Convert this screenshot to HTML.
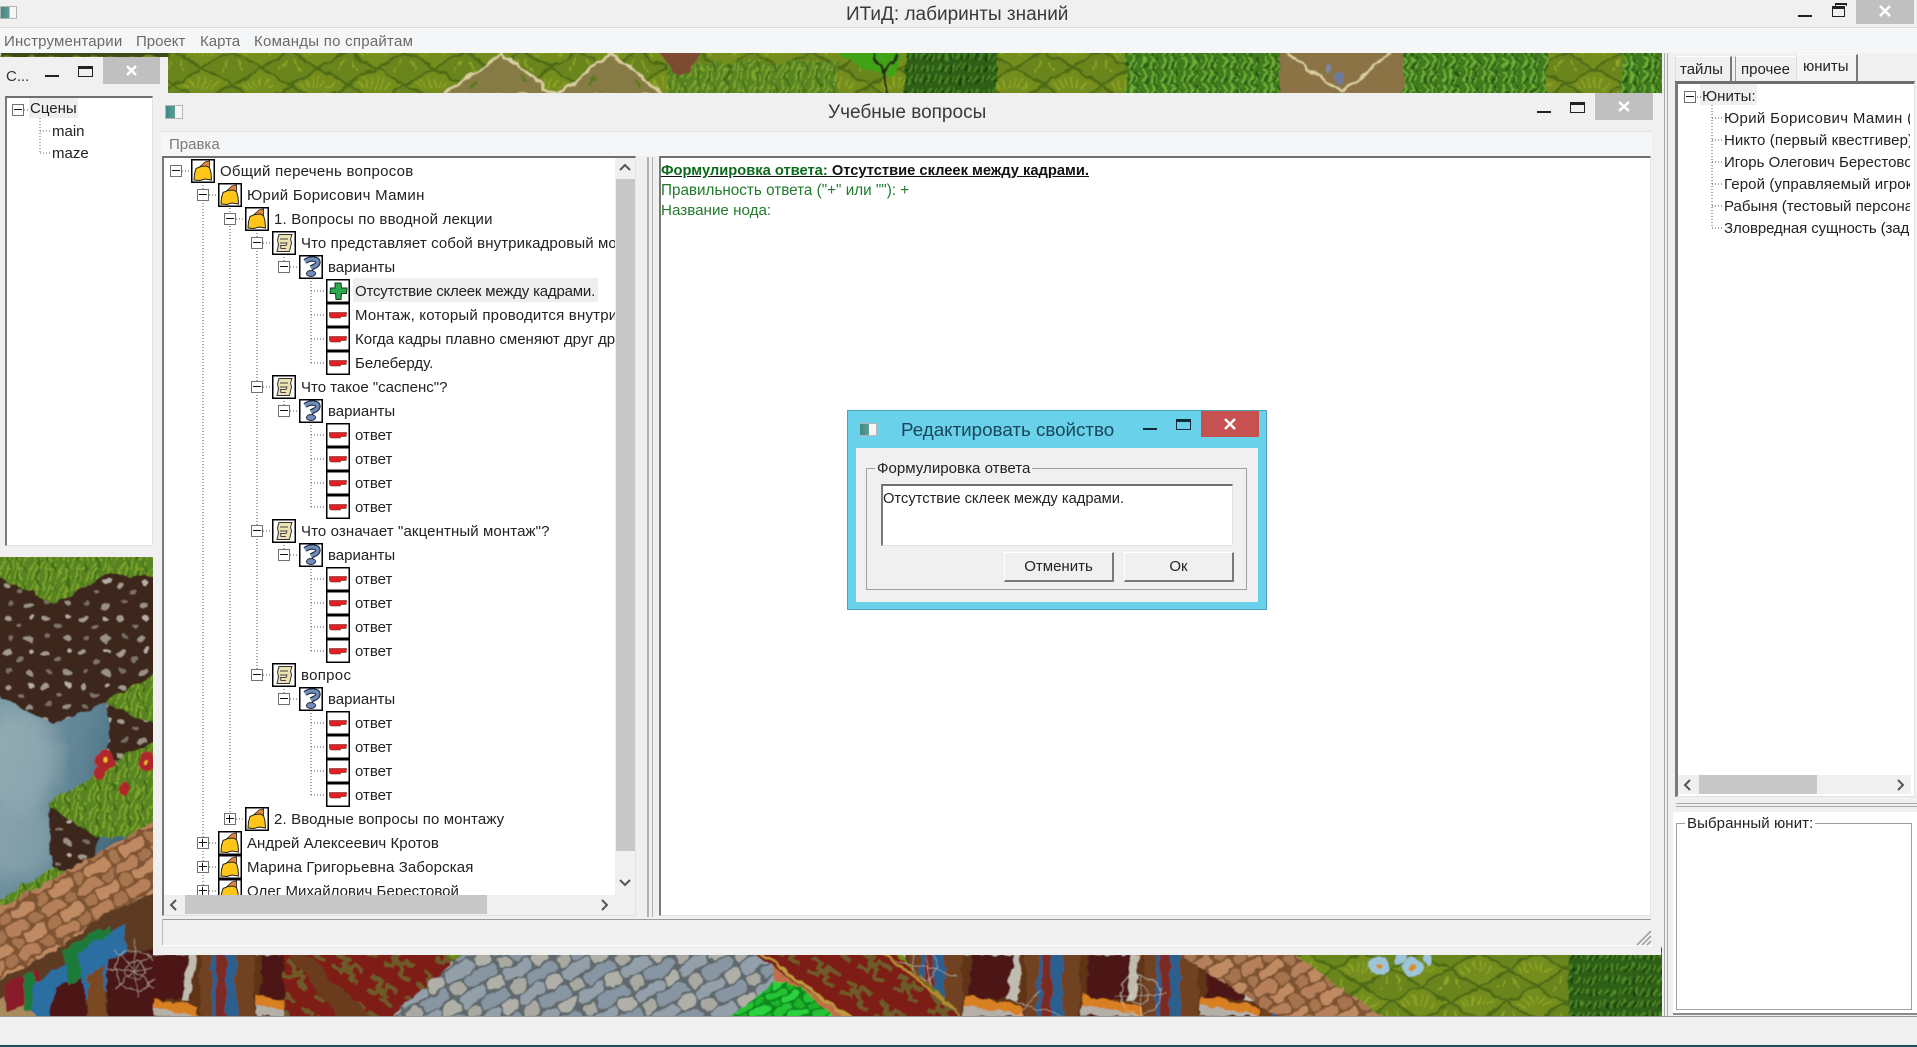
<!DOCTYPE html>
<html lang="ru"><head><meta charset="utf-8"><title>ИТиД: лабиринты знаний</title>
<style>
html,body{margin:0;padding:0;width:1917px;height:1047px;overflow:hidden;background:#f0f0f0}
body{position:relative;font:15px/20px "Liberation Sans","Noto Sans CJK SC",sans-serif;color:#222}
.t{position:absolute;white-space:nowrap}
.box{position:absolute;background:#fff;box-sizing:border-box;border-top:2px solid #6f6f6f;border-left:2px solid #7a7a7a;border-right:1px solid #e4e4e4;border-bottom:1px solid #e0e0e0}
.mn{position:absolute;height:2px;width:14px;background:#222}
.mx{position:absolute;box-sizing:border-box;width:15px;height:11px;border:1px solid #222;border-top-width:3px}
.cl{position:absolute;background:#c0c0c0}
.cl svg{position:absolute;left:0;top:0;width:100%;height:100%}
.tree{position:absolute;overflow:hidden;background:#fff}
.r{position:absolute;height:24px;width:600px;white-space:nowrap}
.r svg.i{position:absolute;left:20px;top:0;width:24px;height:24px}
.r span{position:absolute;left:49px;top:0;line-height:26px;color:#222}
.r span.h{left:47px;top:-1px;height:24px;line-height:28px;padding:0 3px 0 2px;background:#efefef;letter-spacing:-.19px}
.e{position:absolute;left:-1px;top:6px;width:10px;height:10px;border:1px solid #707070;background:#fff}
.e::before{content:"";position:absolute;left:1px;top:4px;width:8px;height:1px;background:#111}
.e.p::after{content:"";position:absolute;left:4px;top:1px;width:1px;height:8px;background:#111}
.ico{position:absolute;width:17px;height:13px;box-sizing:border-box;background:linear-gradient(90deg,#3d8a85 0,#5f9c92 55%,#f6f6f6 56%);border:1px solid #b4b4b4}
.btn{position:absolute;box-sizing:border-box;height:30px;width:110px;background:#f0f0f0;border-top:1px solid #fff;border-left:1px solid #fff;border-right:2px solid #777;border-bottom:2px solid #777;text-align:center;line-height:27px;font-size:15px;color:#222}
</style></head><body>

<svg width="1917" height="1047" viewBox="0 0 1917 1047" style="position:absolute;left:0;top:0">
<defs>
<pattern id="gr" width="58" height="34" patternUnits="userSpaceOnUse">
<rect width="58" height="34" fill="#6b851d"/>
<path d="M0 17 29 0 58 17 29 34Z" fill="#748d1e"/>
<path d="M0 17 29 0 58 17M0 17 29 34 58 17" fill="none" stroke="#4d6a14" stroke-width="2.500"/>
<path d="M20 20l-5-8M24 20l-2-10M28 20l1-11M32 20l4-9M36 21l7-6M16 21l-6-5M10 3l-3-6M48 3l3-6M7 33l-2-7M52 33l2-7" stroke="#8ea528" stroke-width="1.600" fill="none"/>
</pattern>
<pattern id="gr2" width="30" height="20" patternUnits="userSpaceOnUse">
<rect width="30" height="20" fill="#588520"/>
<path d="M3 20l3-12M9 20l-2-14M15 20l4-16M21 20l-1-12M27 20l3-10M0 10l5-8M12 10l3-9M22 10l4-8" stroke="#80a42e" stroke-width="1.800"/>
<path d="M6 20l3-10M18 20l2-10M26 12l-3-10M10 8l-3-8" stroke="#3c6a14" stroke-width="1.600"/>
</pattern>
<pattern id="bush" width="20" height="14" patternUnits="userSpaceOnUse">
<rect width="20" height="14" fill="#3f7a1f"/>
<path d="M2 12l5-8M9 13l4-10M15 12l4-9M6 4l-3-5M14 6l-3-6" stroke="#6fb038" stroke-width="2"/>
<path d="M5 13l3-6M12 14l4-7M19 7l-3-6" stroke="#255012" stroke-width="1.500"/>
</pattern>
<pattern id="dk" width="18" height="12" patternUnits="userSpaceOnUse">
<rect width="18" height="12" fill="#2f5f16"/>
<path d="M2 11l4-7M9 12l3-8M15 11l3-7" stroke="#4e8a26" stroke-width="1.800"/>
<path d="M5 12l3-5M13 12l2-6" stroke="#173a0a" stroke-width="1.500"/>
</pattern>
<pattern id="dirt" width="38" height="34" patternUnits="userSpaceOnUse">
<rect width="38" height="34" fill="#3c261a"/>
<ellipse cx="7" cy="7" rx="4" ry="2.700" fill="#a59a8e"/><ellipse cx="20" cy="14" rx="3.200" ry="2.200" fill="#7d7369"/>
<ellipse cx="31" cy="5" rx="2.700" ry="2" fill="#b8aea4"/><ellipse cx="10" cy="25" rx="3.200" ry="2.200" fill="#776c62"/>
<ellipse cx="29" cy="27" rx="4.500" ry="2.800" fill="#9a9085"/>
</pattern>
<pattern id="cob" width="42" height="26" patternUnits="userSpaceOnUse" patternTransform="rotate(-30)">
<rect width="42" height="26" fill="#7d5233"/>
<rect x="1" y="1" width="24" height="11" rx="4" fill="#b5805a"/><rect x="27" y="1" width="14" height="11" rx="4" fill="#a6734f"/>
<rect x="1" y="14" width="11" height="11" rx="4" fill="#a8764f"/><rect x="14" y="14" width="26" height="11" rx="4" fill="#c08a62"/>
</pattern>
<pattern id="gs" width="52" height="28" patternUnits="userSpaceOnUse" patternTransform="rotate(-30)">
<rect width="52" height="28" fill="#5f676c"/>
<rect x="1" y="1" width="30" height="12" rx="4" fill="#93a0aa"/><rect x="33" y="1" width="18" height="12" rx="4" fill="#b0b0a8"/>
<rect x="1" y="15" width="14" height="12" rx="4" fill="#a9a9a2"/><rect x="17" y="15" width="33" height="12" rx="4" fill="#8796a2"/>
</pattern>
<pattern id="gn" width="34" height="18" patternUnits="userSpaceOnUse" patternTransform="rotate(-25)">
<rect width="34" height="18" fill="#0e8a1c"/>
<rect x="1" y="1" width="20" height="7" rx="3" fill="#25c234"/><rect x="23" y="1" width="10" height="7" rx="3" fill="#1cb22c"/>
<rect x="1" y="10" width="10" height="7" rx="3" fill="#1cb22c"/><rect x="13" y="10" width="20" height="7" rx="3" fill="#2ad23c"/>
</pattern>
<pattern id="crp" width="40" height="32" patternUnits="userSpaceOnUse" patternTransform="rotate(33)">
<rect width="40" height="32" fill="#7e1b12"/>
<path d="M4 8h10v6h8v-6h12M6 22h10v-5h10v5h10" fill="none" stroke="#6d5c2a" stroke-width="4"/>
</pattern>
<pattern id="shelf" width="118" height="61" patternUnits="userSpaceOnUse" patternTransform="translate(0 955)">
<rect width="118" height="61" fill="#5e3419"/>
<path d="M0 0h18v61H0z" fill="#6f4323"/>
<path d="M28 0h42l-5 44H24z" fill="#4d1712"/>
<path d="M70 0h8l-6 46h-8z" fill="#c2bcb0"/>
<path d="M20 40l60 12v9H20z" fill="#d87f22"/>
<path d="M20 50l60 11H20z" fill="#b4b0a8"/>
<path d="M82 0h36v61H82z" fill="#2c5e8e"/><path d="M82 0h12v61H82z" fill="#6f4323"/><path d="M98 0h10v61H98z" fill="#7c2a22"/>
</pattern>
<linearGradient id="sky" x1="0" y1="0" x2="1" y2="0.3"><stop offset="0" stop-color="#82a0aa"/><stop offset=".55" stop-color="#5f8494"/><stop offset="1" stop-color="#33596d"/></linearGradient>
<filter id="bl"><feGaussianBlur stdDeviation="9"/></filter>
<filter id="org" x="0" y="0" width="100%" height="100%"><feTurbulence type="fractalNoise" baseFrequency=".07" numOctaves="3" seed="4"/><feDisplacementMap in="SourceGraphic" scale="9" xChannelSelector="R" yChannelSelector="G"/><feGaussianBlur stdDeviation=".6"/></filter>
<symbol id="bag" viewBox="0 0 24 24"><rect x=".75" y=".75" width="22.500" height="22.500" fill="#fff" stroke="#000" stroke-width="1.500"/><path d="M9 7.500 14 3 18.500 2 18.500 8.500Z" fill="#e8853a" stroke="#222" stroke-width=".8"/><path d="M5 9.500 10 7.500 15 7 18.500 8.500 20 14 20.500 21 14 20 9 21.500 3 21 3.500 15Z" fill="#ffc618" stroke="#222" stroke-width="1"/></symbol>
<symbol id="scr" viewBox="0 0 24 24"><rect x=".75" y=".75" width="22.500" height="22.500" fill="#fff" stroke="#000" stroke-width="1.500"/><path d="M7 3.500H20L18.500 8 19.500 12 17.500 20.500H5L6.500 14 5.500 9Z" fill="#efe2b4" stroke="#333" stroke-width="1"/><path d="M8 8h8M8 12h7l-1 2.500H8.500l.5 3h5" fill="none" stroke="#444" stroke-width="1"/></symbol>
<symbol id="q" viewBox="0 0 24 24"><rect x=".75" y=".75" width="22.500" height="22.500" fill="#fff" stroke="#000" stroke-width="1.500"/><path d="M6 6.500Q12 2.500 18 5 20.500 8.500 16 11L12 13" fill="none" stroke="#1d2a40" stroke-width="5.500"/><path d="M6 6.500Q12 2.500 18 5 20.500 8.500 16 11L12 13" fill="none" stroke="#6f8db8" stroke-width="3.200"/><ellipse cx="12" cy="18.500" rx="4.500" ry="3" fill="#6f8db8" stroke="#1d2a40"/></symbol>
<symbol id="pl" viewBox="0 0 24 24"><rect x=".75" y=".75" width="22.500" height="22.500" fill="#fff" stroke="#000" stroke-width="1.500"/><path d="M9 4H15L15.500 9H21L20.500 14.500H15.500L15 20.500H10L9.500 14.500H4L4.500 9H9Z" fill="#2ea84f" stroke="#0c3a1c" stroke-width="1"/></symbol>
<symbol id="mi" viewBox="0 0 24 24"><rect x=".75" y=".75" width="22.500" height="22.500" fill="#fff" stroke="#000" stroke-width="1.500"/><path d="M3.500 9.500H20.500L20 13.500H15L14 15H5L3.500 13.500Z" fill="#e12025" stroke="#5a1416" stroke-width=".6"/></symbol>
</defs>

<g filter="url(#org)">
<!-- top strip -->
<rect x="0" y="44" width="1680" height="52" fill="url(#gr)"/>
<rect x="0" y="44" width="168" height="13" fill="#3e4a18"/>
<path d="M443 96 502 53 557 96ZM557 96 611 53 667 96Z" fill="#867a45" stroke="#d9cf9c" stroke-width="2.500"/>
<path d="M470 88l8-8M520 75l6 8M590 85l5-9M635 80l6 8" stroke="#5c7a1a" stroke-width="3"/>
<rect x="667" y="62" width="172" height="34" fill="url(#gr2)"/>
<path d="M650 44H705L690 70 680 78 672 70Z" fill="#7b4b33"/>
<path d="M834 44H906L892 78 870 70 846 62Z" fill="#3fa318"/>
<rect x="906" y="44" width="91" height="52" fill="url(#dk)"/>
<path d="M887 96 884 70 872 50M884 72 898 56" stroke="#2a2a14" stroke-width="2.500" fill="none"/>
<rect x="1126" y="44" width="153" height="52" fill="url(#bush)"/>
<rect x="1279" y="44" width="124" height="52" fill="#8b7344"/>
<path d="M1284 50 1341 93 1394 50" fill="none" stroke="#d9cf9c" stroke-width="2.500"/>
<ellipse cx="1328" cy="68" rx="3" ry="6" fill="#7b87a0"/><ellipse cx="1340" cy="79" rx="4" ry="7" fill="#6e7c9c"/>
<rect x="1403" y="44" width="144" height="52" fill="url(#bush)"/>
<rect x="1623" y="44" width="50" height="52" fill="url(#bush)"/>

<!-- left lower scene -->
<rect x="0" y="550" width="170" height="475" fill="url(#gr2)"/>
<polygon points="-10,690 170,690 170,905 -10,905" fill="url(#sky)"/>
<ellipse cx="20" cy="760" rx="40" ry="50" fill="#a5b8be" opacity=".55" filter="url(#bl)"/>
<ellipse cx="20" cy="840" rx="40" ry="40" fill="#a5b8be" opacity=".4" filter="url(#bl)"/>
<polygon points="-10,572 53,604 107,575 170,575 170,700 107,702 53,725 -10,692" fill="url(#dirt)"/>
<polygon points="-10,550 170,550 170,578 107,574 53,604 -10,572" fill="url(#gr2)"/>
<polygon points="107,700 170,668 170,730 135,718 107,706" fill="url(#gr2)"/>
<polygon points="107,704 170,730 170,742 118,760 107,760" fill="url(#dirt)"/>
<polygon points="50,806 100,832 90,880 52,868" fill="url(#dirt)"/>
<polygon points="50,802 95,775 125,755 170,738 170,828 100,838 50,806" fill="url(#gr2)"/>
<polygon points="-10,905 52,868 90,880 125,836 170,812 170,840 60,900 -10,935" fill="url(#gr2)"/>
<polygon points="-10,915 170,812 170,885 107,913 52,953 -10,985" fill="url(#cob)"/>
<polygon points="-10,985 52,953 107,913 170,885 170,1025 -10,1025" fill="#5c3a20"/>
<polygon points="-10,1003 18,990 46,1025 -10,1025" fill="#a88a5c"/>
<polygon points="4,985 38,968 40,1000 6,1012" fill="#8a1a2a"/>
<polygon points="22,976 34,970 36,1008 24,1012" fill="#1f7a3a"/>
<polygon points="32,985 70,960 78,1010 36,1025" fill="#2c6ea2"/>
<polygon points="50,1025 54,988 84,976 88,1025" fill="#4d1714"/>
<polygon points="60,950 108,925 122,950 70,985" fill="#1f7a3a"/>
<polygon points="78,952 125,925 130,985 86,1000" fill="#2c6ea2"/>
<polygon points="108,1025 108,960 170,940 170,1025" fill="#4b1916"/>
<polygon points="88,1025 88,975 104,966 108,1025" fill="#7a4a22"/>
<g fill="#b0262a"><circle cx="105" cy="761" r="9"/><circle cx="99" cy="774" r="6"/><circle cx="124" cy="789" r="6"/><circle cx="147" cy="762" r="9"/></g>
<g fill="#e8c020"><circle cx="105" cy="761" r="2"/><circle cx="147" cy="762" r="2"/></g>
<g stroke="#d8d0c4" stroke-width=".7" fill="none" opacity=".7"><path d="M135 940 135 1000M108 970 160 970M115 950 155 990M155 950 115 990"/><circle cx="135" cy="970" r="10"/><circle cx="135" cy="970" r="20"/></g>

<!-- bottom strip -->
<rect x="153" y="948" width="1520" height="78" fill="url(#gr)"/>
<rect x="153" y="948" width="131" height="78" fill="url(#shelf)"/>
<polygon points="284,948 440,948 530,1026 284,1026" fill="url(#crp)"/>
<polygon points="284,948 300,948 380,1026 345,1026" fill="#6a3a1c"/>
<polygon points="385,1026 450,975 470,948 790,948 870,1026" fill="#c07048"/>
<polygon points="381,1026 470,948 770,948 777,990 727,1026" fill="url(#gs)"/>
<polygon points="717,1026 775,980 800,987 845,1026" fill="url(#gn)"/>
<polygon points="745,948 890,948 970,1026 860,1026" fill="url(#crp)"/>
<path d="M757 950 860 1026" stroke="#c29a40" stroke-width="3"/>
<path d="M880 950 975 1026" stroke="#b08a30" stroke-width="3"/>
<polygon points="893,948 1218,948 1292,1026 972,1026" fill="url(#shelf)"/>
<g stroke="#d8d0c4" stroke-width=".8" fill="none" opacity=".7"><path d="M925 955 930 985M895 960 955 975M1020 1016 1040 990M1010 1000 1060 1015M1140 975 1140 1016M1115 995 1165 995"/><circle cx="1140" cy="995" r="10"/><circle cx="1140" cy="995" r="20"/><circle cx="925" cy="965" r="14"/></g>
<polygon points="1170,948 1285,948 1397,1026 1292,1026" fill="url(#cob)"/>
<rect x="1569" y="948" width="104" height="78" fill="url(#dk)"/>
<g fill="#9cc6d8"><circle cx="1380" cy="966" r="10"/><circle cx="1412" cy="967" r="10"/><circle cx="1400" cy="958" r="5"/><circle cx="1428" cy="958" r="5"/></g>
<g fill="#d88a20"><circle cx="1380" cy="966" r="3"/><circle cx="1412" cy="967" r="3"/></g>
</g>
</svg>

<!-- title bar & menu -->
<div style="position:absolute;left:0;top:0;width:1917px;height:27px;background:#f0f0f0;border-bottom:1px solid #d9d9d9"></div>
<div style="position:absolute;left:0;top:28px;width:1917px;height:25px;background:#f5f6f7"></div>
<div class="ico" style="left:0;top:6px"></div>
<div class="t" style="left:846px;top:4px;font-size:19px;line-height:22px;color:#3a3a3a">ИТиД: лабиринты знаний</div>
<div class="t" style="left:4px;top:32px;color:#6a6a6a;letter-spacing:.17px">Инструментарии</div>
<div class="t" style="left:136px;top:32px;color:#6a6a6a">Проект</div>
<div class="t" style="left:200px;top:32px;color:#6a6a6a">Карта</div>
<div class="t" style="left:254px;top:32px;color:#6a6a6a;letter-spacing:.25px">Команды по спрайтам</div>
<div class="mn" style="left:1798px;top:15px"></div>
<div class="mx" style="left:1832px;top:6px;width:13px;height:11px"></div>
<div style="position:absolute;left:1835px;top:3px;width:12px;height:3px;border:1px solid #222;border-bottom:0;box-sizing:border-box;border-top-width:2px"></div>
<div class="cl" style="left:1856px;top:0;width:58px;height:24px"><svg viewBox="0 0 58 24"><path d="M24 6 34 16M34 6 24 16" stroke="#fff" stroke-width="2.500"/></svg></div>

<!-- left sub window -->
<div style="position:absolute;left:0;top:57px;width:168px;height:38px;background:#f0f0f0"></div>
<div style="position:absolute;left:0;top:93px;width:153px;height:464px;background:#f0f0f0"></div>
<div class="t" style="left:6px;top:67px;color:#333">С...</div>
<div class="mn" style="left:45px;top:75px"></div>
<div class="mx" style="left:78px;top:66px"></div>
<div class="cl" style="left:103px;top:57px;width:57px;height:27px"><svg viewBox="0 0 57 27"><path d="M24 9 33 18M33 9 24 18" stroke="#fff" stroke-width="2.500"/></svg></div>
<div class="box" style="left:5px;top:96px;width:148px;height:450px"></div>
<div style="position:absolute;left:29px;top:98px;width:49px;height:20px;background:#efefef"></div>
<div class="e" style="left:12px;top:104px"></div>
<div class="t" style="left:30px;top:99px">Сцены</div>
<div class="t" style="left:52px;top:122px">main</div>
<div class="t" style="left:52px;top:144px">maze</div>
<svg style="position:absolute;left:0;top:0" width="160" height="170"><path d="M24 110H29M40 118V153M40 131H50M40 153H50" stroke="#666" stroke-dasharray="1 2" fill="none"/></svg>

<!-- main window -->
<div style="position:absolute;left:153px;top:93px;width:1508px;height:862px;background:#f0f0f0"></div>
<div class="ico" style="left:165px;top:105px;width:18px;height:14px"></div>
<div class="t" style="left:828px;top:102px;font-size:19px;line-height:22px;color:#3a3a3a">Учебные вопросы</div>
<div class="mn" style="left:1537px;top:111px"></div>
<div class="mx" style="left:1570px;top:102px"></div>
<div class="cl" style="left:1595px;top:93px;width:58px;height:27px"><svg viewBox="0 0 58 27"><path d="M24 9 34 18M34 9 24 18" stroke="#fff" stroke-width="2.500"/></svg></div>
<div style="position:absolute;left:161px;top:131px;width:1491px;height:25px;background:#f5f6f7;border-top:1px solid #e2e2e2;box-sizing:border-box"></div>
<div class="t" style="left:169px;top:135px;color:#7a7a7a">Правка</div>

<!-- left tree box -->
<div class="box" style="left:162px;top:156px;width:474px;height:760px;background:#f0f0f0"></div>
<div class="tree" style="left:164px;top:158px;width:451px;height:737px">
<svg style="position:absolute;left:-164px;top:-158px" width="700" height="1000"><path d="M203 182V891M230 205V819M257 230V675M284 254V267M284 398V411M284 542V555M284 686V699M311 278V363M311 422V507M311 566V651M311 710V795M182 171H191M209 195H218M209 843H218M209 867H218M209 891H218M236 219H245M236 819H245M263 243H272M263 387H272M263 531H272M263 675H272M290 267H299M290 411H299M290 555H299M290 699H299M311 291H326M311 315H326M311 339H326M311 363H326M311 435H326M311 459H326M311 483H326M311 507H326M311 579H326M311 603H326M311 627H326M311 651H326M311 723H326M311 747H326M311 771H326M311 795H326" stroke="#555" stroke-dasharray="1 2" fill="none"/></svg>
<div class="r" style="top:1px;left:7px"><b class="e"></b><svg class="i"><use href="#bag"/></svg><span style="letter-spacing:.26px">Общий перечень вопросов</span></div>
<div class="r" style="top:25px;left:34px"><b class="e"></b><svg class="i"><use href="#bag"/></svg><span style="letter-spacing:.3px">Юрий Борисович Мамин</span></div>
<div class="r" style="top:49px;left:61px"><b class="e"></b><svg class="i"><use href="#bag"/></svg><span style="letter-spacing:.18px">1. Вопросы по вводной лекции</span></div>
<div class="r" style="top:73px;left:88px"><b class="e"></b><svg class="i"><use href="#scr"/></svg><span style="letter-spacing:.1px">Что представляет собой внутрикадровый монтаж?</span></div>
<div class="r" style="top:97px;left:115px"><b class="e"></b><svg class="i"><use href="#q"/></svg><span>варианты</span></div>
<div class="r" style="top:121px;left:142px"><svg class="i"><use href="#pl"/></svg><span class="h">Отсутствие склеек между кадрами.</span></div>
<div class="r" style="top:145px;left:142px"><svg class="i"><use href="#mi"/></svg><span style="letter-spacing:.2px">Монтаж, который проводится внутри кадра.</span></div>
<div class="r" style="top:169px;left:142px"><svg class="i"><use href="#mi"/></svg><span>Когда кадры плавно сменяют друг друга.</span></div>
<div class="r" style="top:193px;left:142px"><svg class="i"><use href="#mi"/></svg><span>Белеберду.</span></div>
<div class="r" style="top:217px;left:88px"><b class="e"></b><svg class="i"><use href="#scr"/></svg><span>Что такое "саспенс"?</span></div>
<div class="r" style="top:241px;left:115px"><b class="e"></b><svg class="i"><use href="#q"/></svg><span>варианты</span></div>
<div class="r" style="top:265px;left:142px"><svg class="i"><use href="#mi"/></svg><span>ответ</span></div>
<div class="r" style="top:289px;left:142px"><svg class="i"><use href="#mi"/></svg><span>ответ</span></div>
<div class="r" style="top:313px;left:142px"><svg class="i"><use href="#mi"/></svg><span>ответ</span></div>
<div class="r" style="top:337px;left:142px"><svg class="i"><use href="#mi"/></svg><span>ответ</span></div>
<div class="r" style="top:361px;left:88px"><b class="e"></b><svg class="i"><use href="#scr"/></svg><span style="letter-spacing:.11px">Что означает "акцентный монтаж"?</span></div>
<div class="r" style="top:385px;left:115px"><b class="e"></b><svg class="i"><use href="#q"/></svg><span>варианты</span></div>
<div class="r" style="top:409px;left:142px"><svg class="i"><use href="#mi"/></svg><span>ответ</span></div>
<div class="r" style="top:433px;left:142px"><svg class="i"><use href="#mi"/></svg><span>ответ</span></div>
<div class="r" style="top:457px;left:142px"><svg class="i"><use href="#mi"/></svg><span>ответ</span></div>
<div class="r" style="top:481px;left:142px"><svg class="i"><use href="#mi"/></svg><span>ответ</span></div>
<div class="r" style="top:505px;left:88px"><b class="e"></b><svg class="i"><use href="#scr"/></svg><span style="letter-spacing:.3px">вопрос</span></div>
<div class="r" style="top:529px;left:115px"><b class="e"></b><svg class="i"><use href="#q"/></svg><span>варианты</span></div>
<div class="r" style="top:553px;left:142px"><svg class="i"><use href="#mi"/></svg><span>ответ</span></div>
<div class="r" style="top:577px;left:142px"><svg class="i"><use href="#mi"/></svg><span>ответ</span></div>
<div class="r" style="top:601px;left:142px"><svg class="i"><use href="#mi"/></svg><span>ответ</span></div>
<div class="r" style="top:625px;left:142px"><svg class="i"><use href="#mi"/></svg><span>ответ</span></div>
<div class="r" style="top:649px;left:61px"><b class="e p"></b><svg class="i"><use href="#bag"/></svg><span style="letter-spacing:.13px">2. Вводные вопросы по монтажу</span></div>
<div class="r" style="top:673px;left:34px"><b class="e p"></b><svg class="i"><use href="#bag"/></svg><span style="letter-spacing:.05px">Андрей Алексеевич Кротов</span></div>
<div class="r" style="top:697px;left:34px"><b class="e p"></b><svg class="i"><use href="#bag"/></svg><span style="letter-spacing:.13px">Марина Григорьевна Заборская</span></div>
<div class="r" style="top:721px;left:34px"><b class="e p"></b><svg class="i"><use href="#bag"/></svg><span style="letter-spacing:.05px">Олег Михайлович Берестовой</span></div>
</div>
<!-- scrollbars -->
<div style="position:absolute;left:615px;top:158px;width:20px;height:737px;background:#f0f0f0"></div>
<div style="position:absolute;left:616px;top:179px;width:19px;height:672px;background:#c8c8c8"></div>
<svg style="position:absolute;left:615px;top:160px" width="20" height="14"><path d="M5 10 10 5 15 10" fill="none" stroke="#555" stroke-width="2"/></svg>
<svg style="position:absolute;left:615px;top:876px" width="20" height="14"><path d="M5 4 10 9 15 4" fill="none" stroke="#555" stroke-width="2"/></svg>
<div style="position:absolute;left:185px;top:895px;width:302px;height:19px;background:#c8c8c8"></div>
<svg style="position:absolute;left:166px;top:897px" width="16" height="16"><path d="M10 3 5 8 10 13" fill="none" stroke="#555" stroke-width="2"/></svg>
<svg style="position:absolute;left:596px;top:897px" width="16" height="16"><path d="M6 3 11 8 6 13" fill="none" stroke="#555" stroke-width="2"/></svg>
<!-- splitter -->
<div style="position:absolute;left:647px;top:157px;width:2px;height:760px;background:#b0b0b0"></div>
<div style="position:absolute;left:652px;top:157px;width:1px;height:760px;background:#b0b0b0"></div>
<!-- right pane -->
<div class="box" style="left:659px;top:156px;width:992px;height:760px"></div>
<div class="t" style="left:661px;top:161px;font-weight:bold;text-decoration:underline;color:#111;font-size:14.700px"><span style="color:#0a6a1a">Формулировка ответа:</span> Отсутствие склеек между кадрами.</div>
<div class="t" style="left:661px;top:181px;color:#217a2c;font-size:15.250px">Правильность ответа ("+" или ""): +</div>
<div class="t" style="left:661px;top:201px;color:#217a2c;font-size:15.200px">Название нода:</div>
<!-- status -->
<div style="position:absolute;left:162px;top:919px;width:1489px;height:27px;box-sizing:border-box;border-top:1px solid #9a9a9a;border-left:1px solid #bbb;border-bottom:1px solid #fff;background:#f0f0f0"></div>
<svg style="position:absolute;left:1636px;top:930px" width="16" height="16"><path d="M1 15 15 1M6 15 15 6M11 15 15 11" stroke="#999" stroke-width="1.500"/></svg>

<!-- right dock -->
<div style="position:absolute;left:1662px;top:53px;width:255px;height:963px;background:#f0f0f0"></div>
<div style="position:absolute;left:1664px;top:53px;width:1px;height:963px;background:#aaa"></div>
<div style="position:absolute;left:1667px;top:53px;width:1px;height:963px;background:#aaa"></div>
<div style="position:absolute;left:1675px;top:56px;width:57px;height:25px;background:#f0f0f0;box-sizing:border-box;border-top:1px solid #fff;border-right:2px solid #777;border-left:1px solid #ddd"></div>
<div style="position:absolute;left:1735px;top:56px;width:61px;height:25px;background:#f0f0f0;box-sizing:border-box;border-top:1px solid #fff;border-left:1px solid #999"></div>
<div style="position:absolute;left:1796px;top:54px;width:62px;height:27px;background:#f4f4f4;box-sizing:border-box;border-top:1px solid #fff;border-right:2px solid #777;border-left:1px solid #ddd"></div>
<div class="t" style="left:1680px;top:60px">тайлы</div>
<div class="t" style="left:1741px;top:60px">прочее</div>
<div class="t" style="left:1803px;top:57px">юниты</div>
<div class="box" style="left:1675px;top:81px;width:240px;height:716px;border-left-width:3px;border-top-width:3px"></div>
<div style="position:absolute;left:1700px;top:84px;width:57px;height:21px;background:#efefef"></div>
<div class="e" style="left:1684px;top:91px"></div>
<div class="t" style="left:1702px;top:87px">Юниты:</div>
<svg style="position:absolute;left:1680px;top:85px" width="60" height="160"><path d="M17 12H21M32 20V143M32 33H42M32 55H42M32 77H42M32 99H42M32 121H42M32 143H42" stroke="#555" stroke-dasharray="1 2" fill="none"/></svg>
<div style="position:absolute;left:1724px;top:108px;width:186px;height:134px;overflow:hidden;white-space:nowrap;line-height:22px">
<span style="letter-spacing:.35px">Юрий Борисович Мамин (главный</span><br><span style="letter-spacing:.1px">Никто (первый квестгивер)</span><br>Игорь Олегович Берестовой (злодей)<br><span style="letter-spacing:.12px">Герой (управляемый игроком)</span><br>Рабыня (тестовый персонаж)<br><span style="letter-spacing:-.1px">Зловредная сущность (задание)</span>
</div>
<div style="position:absolute;left:1678px;top:775px;width:233px;height:19px;background:#f0f0f0"></div>
<div style="position:absolute;left:1699px;top:775px;width:118px;height:19px;background:#c8c8c8"></div>
<svg style="position:absolute;left:1680px;top:777px" width="16" height="16"><path d="M10 3 5 8 10 13" fill="none" stroke="#555" stroke-width="2"/></svg>
<svg style="position:absolute;left:1892px;top:777px" width="16" height="16"><path d="M6 3 11 8 6 13" fill="none" stroke="#555" stroke-width="2"/></svg>
<div style="position:absolute;left:1676px;top:803px;width:241px;height:1px;background:#aaa"></div>
<div style="position:absolute;left:1676px;top:806px;width:241px;height:1px;background:#aaa"></div>
<div style="position:absolute;left:1673px;top:812px;width:244px;height:203px;background:#fff;border-bottom:2px solid #8a8a8a;box-sizing:border-box"></div>
<div style="position:absolute;left:1676px;top:823px;width:236px;height:187px;box-sizing:border-box;border:1px solid #a0a0a0"></div>
<div class="t" style="left:1685px;top:814px;background:#fff;padding:0 2px;letter-spacing:.1px">Выбранный юнит:</div>

<!-- status bar -->
<div style="position:absolute;left:0;top:1016px;width:1917px;height:29px;background:#f0f0f0;border-top:1px solid #9a9a9a;box-sizing:border-box"></div>
<div style="position:absolute;left:0;top:1045px;width:1917px;height:2px;background:#1f4f5a"></div>

<!-- dialog -->
<div style="position:absolute;left:847px;top:410px;width:420px;height:200px;background:#69d1ea;box-sizing:border-box;border:1px solid #4f9fb8"></div>
<div style="position:absolute;left:856px;top:448px;width:402px;height:154px;background:#f0f0f0"></div>
<div class="ico" style="left:859px;top:423px;width:18px;height:13px"></div>
<div class="t" style="left:901px;top:419px;font-size:18.800px;line-height:22px;color:#19465a">Редактировать свойство</div>
<div class="mn" style="left:1143px;top:428px;background:#102a36"></div>
<div class="mx" style="left:1176px;top:419px;border-color:#102a36"></div>
<div class="cl" style="left:1201px;top:411px;width:58px;height:26px;background:#c75050"><svg viewBox="0 0 58 26"><path d="M24 8 34 18M34 8 24 18" stroke="#fff" stroke-width="2.500"/></svg></div>
<div style="position:absolute;left:866px;top:468px;width:381px;height:122px;box-sizing:border-box;border:1px solid #a0a0a0"></div>
<div class="t" style="left:875px;top:460px;background:#f0f0f0;padding:0 2px;font-size:15.100px;line-height:18px">Формулировка ответа</div>
<div class="box" style="left:881px;top:484px;width:352px;height:62px"></div>
<div class="t" style="left:883px;top:489px;font-size:14.700px">Отсутствие склеек между кадрами.</div>
<div class="btn" style="left:1004px;top:552px">Отменить</div>
<div class="btn" style="left:1124px;top:552px">Ок</div>
</body></html>
